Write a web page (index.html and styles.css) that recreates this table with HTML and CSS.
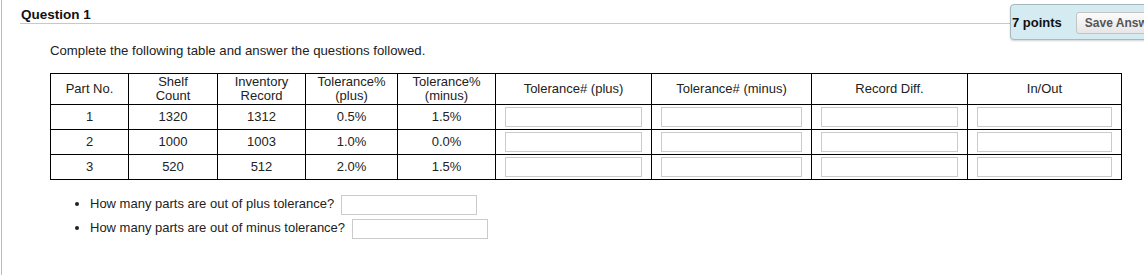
FILE: index.html
```html
<!DOCTYPE html>
<html>
<head>
<meta charset="utf-8">
<title>Question 1</title>
<link rel="stylesheet" href="styles.css">
</head>
<body>
<div class="page">
  <div class="q-header">
    <h2 class="q-title">Question 1</h2>
    <div class="points-box">
      <span class="points">7 points</span>
      <button class="save-btn" type="button">Save Answer</button>
    </div>
  </div>
  <div class="q-body">
    <p class="intro">Complete the following table and answer the questions followed.</p>
    <table class="grid">
      <colgroup>
        <col class="c1"><col class="c2"><col class="c3"><col class="c4"><col class="c5">
        <col class="c6"><col class="c7"><col class="c8"><col class="c9">
      </colgroup>
      <thead>
        <tr>
          <th>Part No.</th>
          <th>Shelf<br>Count</th>
          <th>Inventory<br>Record</th>
          <th>Tolerance%<br>(plus)</th>
          <th>Tolerance%<br>(minus)</th>
          <th>Tolerance# (plus)</th>
          <th>Tolerance# (minus)</th>
          <th>Record Diff.</th>
          <th>In/Out</th>
        </tr>
      </thead>
      <tbody>
        <tr>
          <td>1</td><td>1320</td><td>1312</td><td>0.5%</td><td>1.5%</td>
          <td class="in"><input type="text"></td><td class="in"><input type="text"></td>
          <td class="in"><input type="text"></td><td class="in"><input type="text"></td>
        </tr>
        <tr>
          <td>2</td><td>1000</td><td>1003</td><td>1.0%</td><td>0.0%</td>
          <td class="in"><input type="text"></td><td class="in"><input type="text"></td>
          <td class="in"><input type="text"></td><td class="in"><input type="text"></td>
        </tr>
        <tr>
          <td>3</td><td>520</td><td>512</td><td>2.0%</td><td>1.5%</td>
          <td class="in"><input type="text"></td><td class="in"><input type="text"></td>
          <td class="in"><input type="text"></td><td class="in"><input type="text"></td>
        </tr>
      </tbody>
    </table>
    <ul class="questions">
      <li>How many parts are out of plus tolerance? <input class="answer" type="text"></li>
      <li>How many parts are out of minus tolerance? <input class="answer" type="text"></li>
    </ul>
  </div>
</div>
</body>
</html>
```

FILE: styles.css
```css
html, body {
  margin: 0;
  padding: 0;
  background: #fff;
  overflow: hidden;
}
body {
  font-family: "Liberation Sans", Arial, sans-serif;
  color: #222;
  width: 1144px;
  height: 275px;
}
.page {
  margin-left: 1px;
  border-left: 1px solid #bcbcb6;
  height: 275px;
  padding-left: 18px;
}
.q-header {
  display: flex;
  align-items: flex-start;
  margin-right: -26px;
}
.q-title {
  flex: 1;
  margin: 0;
  padding-top: 7px;
  padding-left: 1px;
  font-size: 13.5px;
  line-height: 16px;
  font-weight: bold;
  color: #111;
  border-bottom: 1px solid #c8c8c8;
}
.points-box {
  flex: 0 0 160px;
  margin-top: 4px;
  margin-bottom: -17px;
  height: 36px;
  box-sizing: border-box;
  background: #d4ecf1;
  border: 1px solid #a6b9bd;
  border-radius: 4px;
  box-shadow: 0 1px 2px rgba(0, 0, 0, 0.18);
  display: flex;
  align-items: center;
  padding-left: 1px;
  gap: 14px;
  overflow: hidden;
  white-space: nowrap;
}
.points {
  font-size: 13px;
  font-weight: bold;
  color: #111;
}
.save-btn {
  height: 22px;
  box-sizing: border-box;
  padding: 0 8px;
  font-family: "Liberation Sans", Arial, sans-serif;
  font-size: 12px;
  font-weight: bold;
  color: #555;
  background: linear-gradient(#fbfbfb, #e6e6e6);
  border: 1px solid #c4c4c4;
  border-radius: 3px;
  margin-top: 1px;
}
.q-body {
  padding-left: 30px;
}
.intro {
  margin: 19px 0 0;
  font-size: 13.2px;
  line-height: 15px;
}
.grid {
  margin-top: 15px;
  border-collapse: collapse;
  table-layout: fixed;
  width: 1071px;
  font-size: 13px;
}
.c1 { width: 78px; }
.c2 { width: 89px; }
.c3 { width: 88px; }
.c4 { width: 92px; }
.c5 { width: 98px; }
.c6 { width: 156px; }
.c7 { width: 160px; }
.c8 { width: 156px; }
.c9 { width: 154px; }
.grid th,
.grid td {
  border: 1px solid #000;
  text-align: center;
  vertical-align: middle;
}
.grid th {
  font-weight: normal;
  line-height: 14px;
  padding: 1px 4px;
  height: 28px;
}
.grid td {
  line-height: 20px;
  padding: 2px 4px;
  height: 20px;
}
.grid td.in {
  padding: 2px 9px;
}
.grid input {
  display: block;
  width: 100%;
  height: 20px;
  box-sizing: border-box;
  border: 1px solid #cbcbcb;
  margin: 0;
  padding: 0 4px;
  background: #fff;
}
.questions {
  margin: 12px 0 0;
  padding-left: 40px;
  font-size: 13px;
  line-height: 24px;
}
.answer {
  width: 136px;
  height: 20px;
  box-sizing: border-box;
  border: 1px solid #cbcbcb;
  margin: 0 0 0 3px;
  padding: 0 4px;
  vertical-align: middle;
}
```
